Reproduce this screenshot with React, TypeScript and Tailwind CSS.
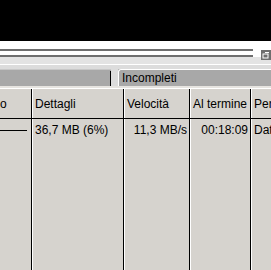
import React from "react";

const font = { fontFamily: '"Liberation Sans", Arial, sans-serif' };

function Sep() {
  return (
    <div className="flex shrink-0 self-stretch">
      <div className="w-px bg-black" />
      <div className="w-px bg-white" />
    </div>
  );
}

export default function App() {
  const cols = [
    { w: "w-[31px]", head: "o", val: null, align: "justify-start" },
    { w: "w-[90px]", head: "Dettagli", val: "36,7 MB (6%)", align: "justify-start" },
    { w: "w-[64px]", head: "Velocità", val: "11,3 MB/s", align: "justify-end" },
    { w: "w-[59px]", head: "Al termine", val: "00:18:09", align: "justify-end" },
    { w: "w-[40px]", head: "Percorso", val: "Dati", align: "justify-start" },
  ];
  return (
    <div className="relative w-[271px] h-[270px] overflow-hidden flex flex-col bg-[#d6d3ce] text-[12px] text-black" style={font}>
      <div className="h-[41px] bg-black shrink-0" />
      <div className="h-[16px] bg-white shrink-0 flex items-start">
        <div className="flex-1 flex flex-col pt-[8px]">
          <div className="h-[2px] bg-[#6e6e6e] mr-[18px]" />
          <div className="h-[4px]" />
          <div className="h-[2px] bg-[#6e6e6e] mr-[18px]" />
        </div>
      </div>
      <div className="h-[7px] bg-[#e3e3e3] shrink-0" />
      <div className="h-px bg-white shrink-0" />
      <div className="h-[4px] bg-[#dcdcdc] shrink-0" />
      <div className="h-[17px] bg-[#a8a8a8] shrink-0 flex items-stretch">
        <div className="w-[111px] flex border-t border-[#c8c8c8]">
          <div className="flex-1" />
          <div className="w-px bg-black mt-[1px]" />
        </div>
        <div className="w-[7px] bg-[#dcdcdc]" />
        <div className="flex-1 flex border-t border-l border-white rounded-tl-[3px] pl-[3px] items-center">
          <span className="leading-none">Incompleti</span>
        </div>
      </div>
      <div className="h-[2px] bg-[#e6e4e0] shrink-0" />
      <div className="flex shrink-0 h-[30px] border-t border-white">
        {cols.map((c, i) => (
          <React.Fragment key={i}>
            {i > 0 && <Sep />}
            <div className={`${c.w} shrink-0 flex items-center overflow-hidden whitespace-nowrap ${i === 0 ? "px-0" : "px-[2px]"}`}>
              {c.head}
            </div>
          </React.Fragment>
        ))}
      </div>
      <div className="h-px bg-black shrink-0" />
      <div className="flex flex-1">
        {cols.map((c, i) => (
          <React.Fragment key={i}>
            {i > 0 && <Sep />}
            <div className={`${c.w} shrink-0 flex flex-col overflow-hidden whitespace-nowrap`}>
              <div className={`h-[22px] flex items-center px-[2px] ${c.align}`}>
                {c.val === null ? (
                  <div className="w-[27px] h-px bg-black -ml-[2px]" />
                ) : (
                  c.val
                )}
              </div>
            </div>
          </React.Fragment>
        ))}
      </div>
      <div className="absolute left-[261px] top-[50px] w-[10px] h-[10px] bg-[#6e6e6e] flex items-center justify-center">
        <svg width="8" height="8" viewBox="0 0 8 8">
          <rect x="1" y="3" width="5" height="4" fill="none" stroke="white" strokeWidth="1" />
          <rect x="3" y="1" width="4" height="1" fill="white" />
        </svg>
      </div>
    </div>
  );
}
